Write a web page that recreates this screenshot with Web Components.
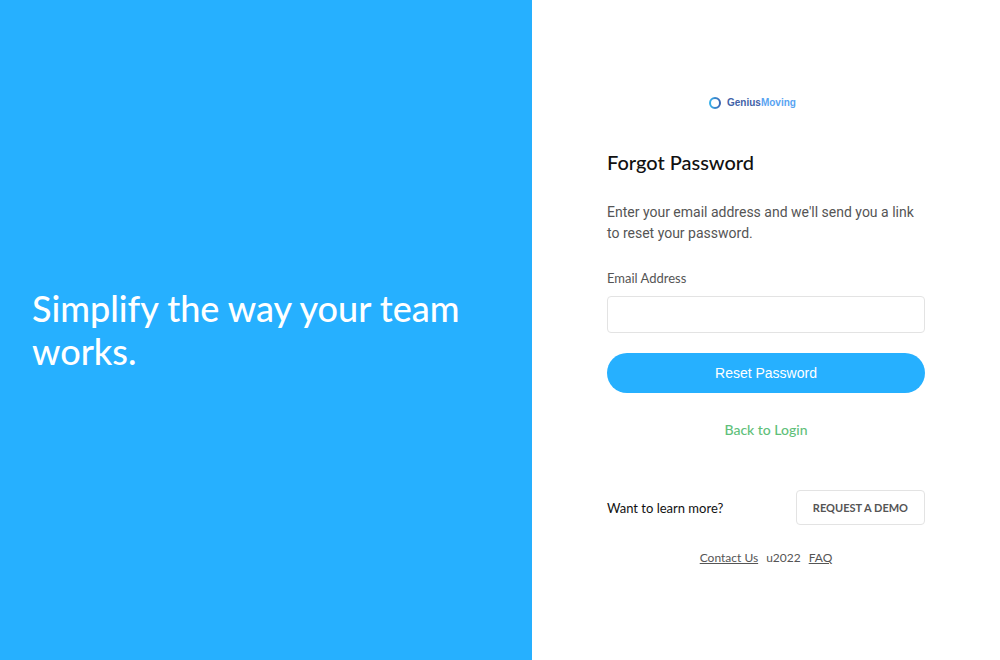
<!DOCTYPE html>
<html lang="en">
<head>
<meta charset="utf-8">
<meta name="viewport" content="width=device-width, initial-scale=1">
<title>Forgot Password</title>
<style>
  html, body { margin: 0; min-height: 100%; background: #fff; }
  body { font-family: Lato, "Liberation Sans", sans-serif; color: #555; }
</style>
</head>
<body>
<auth-layout>
  <hero-panel slot="hero">Simplify the way your team works.</hero-panel>
  <brand-logo></brand-logo>
  <forgot-form></forgot-form>
  <demo-prompt></demo-prompt>
  <footer-links></footer-links>
</auth-layout>
<script>
  function define(name, html) {
    const template = document.createElement('template');
    template.innerHTML = html;
    customElements.define(name, class extends HTMLElement {
      constructor() {
        super();
        this.attachShadow({ mode: 'open' }).append(template.content.cloneNode(true));
      }
    });
  }

  define('auth-layout', `
    <style>
      :host { display: grid; grid-template-columns: 532fr 468fr; min-height: 100vh; }
      main { display: flex; flex-direction: column; justify-content: center; padding: 2px 75px 0; }
    </style>
    <slot name="hero"></slot>
    <main><slot></slot></main>`);

  define('hero-panel', `
    <style>
      :host { display: flex; align-items: center; padding: 0 32px; background: #26b0ff; color: #fff; }
      h1 { margin: 0; font-size: 36px; line-height: 43px; font-weight: 500; }
    </style>
    <h1><slot></slot></h1>`);

  define('brand-logo', `
    <style>
      :host { display: flex; align-items: center; gap: 6px; width: 114px; margin: 0 auto; height: 14px; }
      svg { width: 12px; height: 12px; }
      .name { font: bold 10px/14px "Liberation Sans", sans-serif; color: #4262a8; }
      .name span { color: #58a4f2; }
    </style>
    <svg viewBox="0 0 12 12" aria-hidden="true">
      <defs><linearGradient id="ring" x1="0" y1="0" x2="1" y2="0">
        <stop offset="0" stop-color="#36b0ea"/><stop offset="1" stop-color="#3b66b4"/>
      </linearGradient></defs>
      <circle cx="6" cy="6" r="5" fill="none" stroke="url(#ring)" stroke-width="2"/>
    </svg>
    <div class="name">Genius<span>Moving</span></div>`);

  define('forgot-form', `
    <style>
      :host { display: block; margin-top: 39px; }
      h2 { margin: 0 0 27px; font-size: 20px; line-height: 26px; font-weight: 500; color: #111; }
      p { margin: 0 0 25px; font-family: Roboto, sans-serif; font-size: 14px; line-height: 21px; }
      label { display: block; margin-bottom: 9px; font-size: 13px; line-height: 18px; }
      input { display: block; box-sizing: border-box; width: 100%; height: 37px; padding: 0 12px; border: 1px solid #e3e3e3; border-radius: 4px; background: #fff; font: inherit; font-size: 14px; }
      button { display: block; width: 100%; height: 40px; margin: 20px 0 26px; padding: 0; border: 0; border-radius: 20px; background: #26b0ff; color: #fff; font: 14px/20px "Liberation Sans", sans-serif; }
      a { display: block; width: max-content; margin: 0 auto; font-size: 14px; line-height: 21px; font-weight: 500; color: #5fc07a; text-decoration: none; }
    </style>
    <h2>Forgot Password</h2>
    <p>Enter your email address and we'll send you a link to reset your password.</p>
    <form>
      <label for="email">Email Address</label>
      <input id="email" type="email">
      <button type="button">Reset Password</button>
    </form>
    <a href="#login">Back to Login</a>`);

  define('demo-prompt', `
    <style>
      :host { display: flex; align-items: center; justify-content: space-between; margin-top: 50px; font-size: 13px; line-height: 18px; color: #111; }
      button { box-sizing: border-box; height: 35px; padding: 0 16px; border: 1px solid #e3e3e3; border-radius: 4px; background: #fff; color: #555; font: inherit; font-size: 11px; font-weight: 700; }
    </style>
    <span>Want to learn more?</span>
    <button type="button">REQUEST A DEMO</button>`);

  define('footer-links', `
    <style>
      :host { display: flex; justify-content: center; gap: 8px; margin-top: 25px; font-size: 12px; line-height: 16px; }
      a { color: inherit; }
    </style>
    <a href="#contact">Contact Us</a>
    <span>u2022</span>
    <a href="#faq">FAQ</a>`);
</script>
</body>
</html>
